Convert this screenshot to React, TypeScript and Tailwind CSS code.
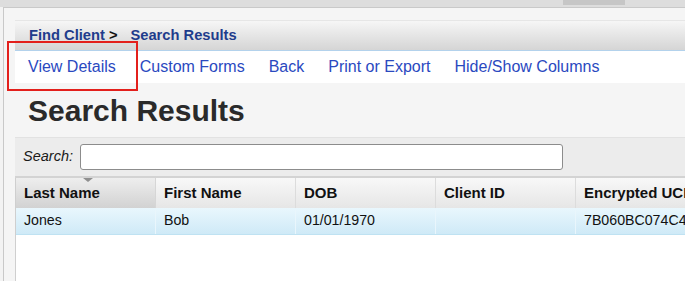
const NAV = ['View Details', 'Custom Forms', 'Back', 'Print or Export', 'Hide/Show Columns'];

const COLS = ['Last Name', 'First Name', 'DOB', 'Client ID', 'Encrypted UCI'];

const ROW = ['Jones', 'Bob', '01/01/1970', '', '7B060BC074C4E1'];

export default function App() {
  return (
    <div className="relative w-[685px] h-[281px] overflow-hidden bg-[#f3f3f3] font-['Liberation_Sans',Arial,sans-serif]">
      {/* top strip */}
      <div className="flex h-[7px] bg-[#dddddd]">
        <div className="w-[563px]" />
        <div className="w-[62px] h-[5px] bg-[#c6c6c6]" />
      </div>

      <div className="ml-[3px] h-[274px] border-l border-t border-[#c9c9c9] bg-[#f5f5f5] pl-[11px] pt-[12px]">
        {/* breadcrumb */}
        <div className="flex h-[31px] items-center whitespace-nowrap border-b border-t border-b-[#b3d2ec] border-t-[#e6e6e6] bg-gradient-to-b from-[#f6f6f6] to-[#d5d5d5] pl-[14px] text-[14.7px] font-bold text-[#1f3c8c]">
          <span>Find Client</span>
          <span className="ml-[4px] text-[#111]">&gt;</span>
          <span className="ml-[13px]">Search Results</span>
        </div>

        {/* nav links */}
        <div className="flex h-[32px] items-center gap-[24px] whitespace-nowrap bg-white pl-[13px] text-[16px] text-[#2a49bf]">
          {NAV.map(n => (
            <span key={n}>{n}</span>
          ))}
        </div>

        <h1 className="mb-[9px] pl-[13px] pt-[11px] text-[30px] font-bold leading-[34px] text-[#2a2a2a]">Search Results</h1>

        {/* search bar */}
        <div className="flex h-[41px] items-center border-b-2 border-t border-b-[#d3d3d3] border-t-[#e2e2e2] bg-[#ececec] pl-[8px]">
          <span className="text-[14.5px] italic text-[#1a1a1a]">Search:</span>
          <div className="ml-[7px] h-[26px] w-[483px] rounded-[3px] border border-[#8c8c8c] bg-white" />
        </div>

        {/* table */}
        <div className="h-full border-l border-[#cfcfcf] bg-white">
          <div className="flex h-[30px] whitespace-nowrap text-[15px] font-bold text-[#111]">
            {COLS.map((c, i) => (
              <div
                key={c}
                className={
                  i === 0
                    ? 'relative flex w-[140px] shrink-0 items-center border-r border-[#d6d6d6] bg-gradient-to-b from-[#eeeeee] to-[#d2d2d2] pl-[8px]'
                    : 'flex w-[140px] shrink-0 items-center border-r border-[#dcdcdc] bg-gradient-to-b from-[#f8f8f8] to-[#e6e6e6] pl-[8px]'
                }
              >
                {c}
                {i === 0 && (
                  <div className="absolute left-[67px] top-0 h-0 w-0 border-l-[5px] border-r-[5px] border-t-[4px] border-l-transparent border-r-transparent border-t-[#8f8f8f]" />
                )}
              </div>
            ))}
          </div>
          <div className="flex h-[27px] whitespace-nowrap border-b border-[#bfe2f2] text-[14.2px] text-[#111]">
            {ROW.map((v, i) => (
              <div
                key={i}
                className="flex w-[140px] shrink-0 items-center border-r border-[#e9f6fc] bg-gradient-to-b from-[#e9f7fd] to-[#cfeaf7] pl-[8px]"
              >
                {v}
              </div>
            ))}
          </div>
        </div>
      </div>

      {/* highlight annotation */}
      <div className="absolute left-[7px] top-[41px] h-[50px] w-[131px] border-2 border-[#e3201c]" />
    </div>
  );
}
